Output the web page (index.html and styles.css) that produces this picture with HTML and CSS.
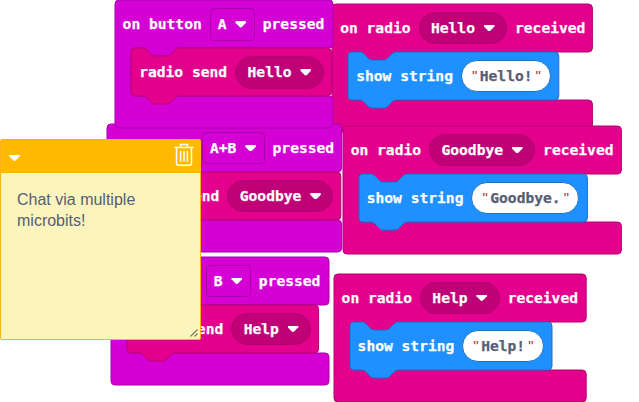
FILE: index.html
```
<!DOCTYPE html>
<html lang="en">
<head>
<meta charset="utf-8">
<title>Blocks workspace</title>
<link rel="stylesheet" href="styles.css">
</head>
<body>
<main class="workspace">
  <section class="event radio radio-hello">
    <svg class="shape" width="260.4" height="128"><path d="M0 4a4 4 0 0 1 4-4H256.4a4 4 0 0 1 4 4V44a4 4 0 0 1-4 4H64c-2 0-3 1-4 2l-4 4c-1 1-2 2-4 2h-12c-2 0-3-1-4-2l-4-4c-1-1-2-2-4-2h-8a4 4 0 0 0-4 4V92a4 4 0 0 0 4 4H256.4a4 4 0 0 1 4 4V124a4 4 0 0 1-4 4H4a4 4 0 0 1-4-4z"/></svg>
    <div class="row"><span>on radio</span><span class="pill">Hello<i class="caret"></i></span><span>received</span></div>
    <div class="statement show">
      <svg class="shape" width="210.8" height="56"><path d="M0 4a4 4 0 0 1 4-4h8c2 0 3 1 4 2l4 4c1 1 2 2 4 2h12c2 0 3-1 4-2l4-4c1-1 2-2 4-2H206.8a4 4 0 0 1 4 4V44a4 4 0 0 1-4 4H48c-2 0-3 1-4 2l-4 4c-1 1-2 2-4 2h-12c-2 0-3-1-4-2l-4-4c-1-1-2-2-4-2h-8a4 4 0 0 1-4-4z"/></svg>
      <div class="row"><span>show string</span><span class="string"><q>"</q>Hello!<q>"</q></span></div>
    </div>
  </section>

  <section class="event button button-ab">
    <svg class="shape" width="234.6" height="128"><path d="M0 4a4 4 0 0 1 4-4H230.6a4 4 0 0 1 4 4V44a4 4 0 0 1-4 4H64c-2 0-3 1-4 2l-4 4c-1 1-2 2-4 2h-12c-2 0-3-1-4-2l-4-4c-1-1-2-2-4-2h-8a4 4 0 0 0-4 4V92a4 4 0 0 0 4 4H230.6a4 4 0 0 1 4 4V124a4 4 0 0 1-4 4H4a4 4 0 0 1-4-4z"/></svg>
    <div class="row"><span>on button</span><span class="field">A+B<i class="caret"></i></span><span>pressed</span></div>
    <div class="statement send">
      <svg class="shape" width="217.8" height="56"><path d="M0 4a4 4 0 0 1 4-4h8c2 0 3 1 4 2l4 4c1 1 2 2 4 2h12c2 0 3-1 4-2l4-4c1-1 2-2 4-2H213.8a4 4 0 0 1 4 4V44a4 4 0 0 1-4 4H48c-2 0-3 1-4 2l-4 4c-1 1-2 2-4 2h-12c-2 0-3-1-4-2l-4-4c-1-1-2-2-4-2h-8a4 4 0 0 1-4-4z"/></svg>
      <div class="row"><span>radio send</span><span class="pill">Goodbye<i class="caret"></i></span></div>
    </div>
  </section>

  <section class="event button button-a">
    <svg class="shape" width="218" height="128"><path d="M0 4a4 4 0 0 1 4-4H214a4 4 0 0 1 4 4V44a4 4 0 0 1-4 4H64c-2 0-3 1-4 2l-4 4c-1 1-2 2-4 2h-12c-2 0-3-1-4-2l-4-4c-1-1-2-2-4-2h-8a4 4 0 0 0-4 4V92a4 4 0 0 0 4 4H214a4 4 0 0 1 4 4V124a4 4 0 0 1-4 4H4a4 4 0 0 1-4-4z"/></svg>
    <div class="row"><span>on button</span><span class="field">A<i class="caret"></i></span><span>pressed</span></div>
    <div class="statement send">
      <svg class="shape" width="200.4" height="56"><path d="M0 4a4 4 0 0 1 4-4h8c2 0 3 1 4 2l4 4c1 1 2 2 4 2h12c2 0 3-1 4-2l4-4c1-1 2-2 4-2H196.4a4 4 0 0 1 4 4V44a4 4 0 0 1-4 4H48c-2 0-3 1-4 2l-4 4c-1 1-2 2-4 2h-12c-2 0-3-1-4-2l-4-4c-1-1-2-2-4-2h-8a4 4 0 0 1-4-4z"/></svg>
      <div class="row"><span>radio send</span><span class="pill">Hello<i class="caret"></i></span></div>
    </div>
  </section>

  <section class="event radio radio-goodbye">
    <svg class="shape" width="278.4" height="128"><path d="M0 4a4 4 0 0 1 4-4H274.4a4 4 0 0 1 4 4V44a4 4 0 0 1-4 4H64c-2 0-3 1-4 2l-4 4c-1 1-2 2-4 2h-12c-2 0-3-1-4-2l-4-4c-1-1-2-2-4-2h-8a4 4 0 0 0-4 4V92a4 4 0 0 0 4 4H274.4a4 4 0 0 1 4 4V124a4 4 0 0 1-4 4H4a4 4 0 0 1-4-4z"/></svg>
    <div class="row"><span>on radio</span><span class="pill">Goodbye<i class="caret"></i></span><span>received</span></div>
    <div class="statement show">
      <svg class="shape" width="228.4" height="56"><path d="M0 4a4 4 0 0 1 4-4h8c2 0 3 1 4 2l4 4c1 1 2 2 4 2h12c2 0 3-1 4-2l4-4c1-1 2-2 4-2H224.4a4 4 0 0 1 4 4V44a4 4 0 0 1-4 4H48c-2 0-3 1-4 2l-4 4c-1 1-2 2-4 2h-12c-2 0-3-1-4-2l-4-4c-1-1-2-2-4-2h-8a4 4 0 0 1-4-4z"/></svg>
      <div class="row"><span>show string</span><span class="string"><q>"</q>Goodbye.<q>"</q></span></div>
    </div>
  </section>

  <section class="event button button-b">
    <svg class="shape" width="218" height="128"><path d="M0 4a4 4 0 0 1 4-4H214a4 4 0 0 1 4 4V44a4 4 0 0 1-4 4H64c-2 0-3 1-4 2l-4 4c-1 1-2 2-4 2h-12c-2 0-3-1-4-2l-4-4c-1-1-2-2-4-2h-8a4 4 0 0 0-4 4V92a4 4 0 0 0 4 4H214a4 4 0 0 1 4 4V124a4 4 0 0 1-4 4H4a4 4 0 0 1-4-4z"/></svg>
    <div class="row"><span>on button</span><span class="field">B<i class="caret"></i></span><span>pressed</span></div>
    <div class="statement send">
      <svg class="shape" width="191.6" height="56"><path d="M0 4a4 4 0 0 1 4-4h8c2 0 3 1 4 2l4 4c1 1 2 2 4 2h12c2 0 3-1 4-2l4-4c1-1 2-2 4-2H187.6a4 4 0 0 1 4 4V44a4 4 0 0 1-4 4H48c-2 0-3 1-4 2l-4 4c-1 1-2 2-4 2h-12c-2 0-3-1-4-2l-4-4c-1-1-2-2-4-2h-8a4 4 0 0 1-4-4z"/></svg>
      <div class="row"><span>radio send</span><span class="pill">Help<i class="caret"></i></span></div>
    </div>
  </section>

  <section class="event radio radio-help">
    <svg class="shape" width="252.2" height="128"><path d="M0 4a4 4 0 0 1 4-4H248.2a4 4 0 0 1 4 4V44a4 4 0 0 1-4 4H64c-2 0-3 1-4 2l-4 4c-1 1-2 2-4 2h-12c-2 0-3-1-4-2l-4-4c-1-1-2-2-4-2h-8a4 4 0 0 0-4 4V92a4 4 0 0 0 4 4H248.2a4 4 0 0 1 4 4V124a4 4 0 0 1-4 4H4a4 4 0 0 1-4-4z"/></svg>
    <div class="row"><span>on radio</span><span class="pill">Help<i class="caret"></i></span><span>received</span></div>
    <div class="statement show">
      <svg class="shape" width="202" height="56"><path d="M0 4a4 4 0 0 1 4-4h8c2 0 3 1 4 2l4 4c1 1 2 2 4 2h12c2 0 3-1 4-2l4-4c1-1 2-2 4-2H198a4 4 0 0 1 4 4V44a4 4 0 0 1-4 4H48c-2 0-3 1-4 2l-4 4c-1 1-2 2-4 2h-12c-2 0-3-1-4-2l-4-4c-1-1-2-2-4-2h-8a4 4 0 0 1-4-4z"/></svg>
      <div class="row"><span>show string</span><span class="string"><q>"</q>Help!<q>"</q></span></div>
    </div>
  </section>

  <aside class="note">
    <header class="note-bar">
      <i class="caret"></i>
      <svg class="trash" width="20" height="24" viewBox="0 0 20 24"><path d="M.5 4.5H19.5M6.5 4V1.5H13.5V4M2.5 5V20.5Q2.5 22.2 4.2 22.2H15.8Q17.5 22.2 17.5 20.5V5M6.6 8V18.8M10 8V18.8M13.4 8V18.8"/></svg>
    </header>
    <div class="note-body">
      <p>Chat via multiple<br>microbits!</p>
      <svg class="grip" width="8" height="8" viewBox="0 0 8 8"><path d="M.5 7.5L7.5.5M4.5 7.5L7.5 4.5"/></svg>
    </div>
  </aside>
</main>
</body>
</html>
```
FILE: styles.css
```
body {
  margin: 0;
  background: #fff;
}

.workspace {
  position: relative;
  width: 639px;
  height: 402px;
  overflow: hidden;
  font: bold 14.62px/20px "DejaVu Sans Mono", monospace;
  color: #fff;
  white-space: nowrap;
  -webkit-text-stroke: .25px;
}

/* Event blocks sit freely on the canvas */
.event {
  position: absolute;
  height: 128px;
}

.button-a { left: 114.6px; top: .3px; }
.button-ab { left: 106.8px; top: 124.2px; }
.button-b { left: 110.7px; top: 256.8px; }
.radio-hello { left: 332.2px; top: 4px; }
.radio-goodbye { left: 342.7px; top: 126px; }
.radio-help { left: 333.6px; top: 273.8px; }

.shape {
  position: absolute;
  left: 0;
  top: 0;
  overflow: visible;
}

.button > .shape { fill: #d400d4; stroke: #a900aa; }
.radio > .shape, .send > .shape { fill: #e3008c; stroke: #b60070; }
.show > .shape { fill: #1e90ff; stroke: #1873cc; }

.row {
  position: relative;
  display: flex;
  align-items: center;
  gap: 8px;
  height: 48px;
  padding: 0 8px;
}

.statement {
  position: relative;
  width: max-content;
  margin-left: 16px;
}

.send .row {
  padding-left: 8.6px;
}

.field, .pill, .string {
  box-sizing: border-box;
  display: flex;
  align-items: center;
  height: 32.5px;
}

.field {
  padding: 0 7.5px 0 7px;
  border: 1px solid #a900aa;
  border-radius: 4px;
}

.pill {
  padding: 0 11.4px;
  border: 1px solid #b10070;
  border-radius: 17px;
  background: #bf0076;
}

.caret {
  width: 11px;
  height: 6.5px;
  margin-left: 8.7px;
  background: #fff;
  clip-path: polygon(8% 0, 92% 0, 100% 13%, 98% 28%, 58% 96%, 50% 100%, 42% 96%, 2% 28%, 0 13%);
}

.string {
  border: 1px solid #1873cc;
  border-radius: 17px;
  background: #fff;
  color: #575e75;
}

.string q {
  width: 17.8px;
  padding-left: 10px;
  box-sizing: border-box;
  font: 15px/18px "Liberation Sans", sans-serif;
  color: #b4322f;
  quotes: none;
  -webkit-text-stroke: 0;
}

.string q::before, .string q::after {
  content: none;
}

.string q:last-child {
  padding-left: 3px;
}

.note {
  position: absolute;
  left: 0;
  top: 139px;
  box-sizing: border-box;
  width: 201px;
  height: 201px;
  border: 1.5px solid #f9b21c;
  border-radius: 2px;
  background: #fbf5bd;
  -webkit-text-stroke: 0;
}

.note-bar {
  display: flex;
  align-items: center;
  justify-content: space-between;
  height: 32.5px;
  padding: 0 6px 0 8px;
  background: #ffb900;
}

.note-bar .caret {
  margin: 3px 0 0;
}

.trash {
  margin-top: -3px;
  fill: none;
  stroke: #fff;
  stroke-width: 1.5;
}

.note-body {
  padding: 16px;
  font: 16px/21.5px "Liberation Sans", sans-serif;
  color: #575e75;
}

.note-body p {
  margin: 0;
}

.grip {
  position: absolute;
  right: 2px;
  bottom: 2px;
  fill: none;
  stroke: #77755d;
  stroke-width: 1.1;
}
```
